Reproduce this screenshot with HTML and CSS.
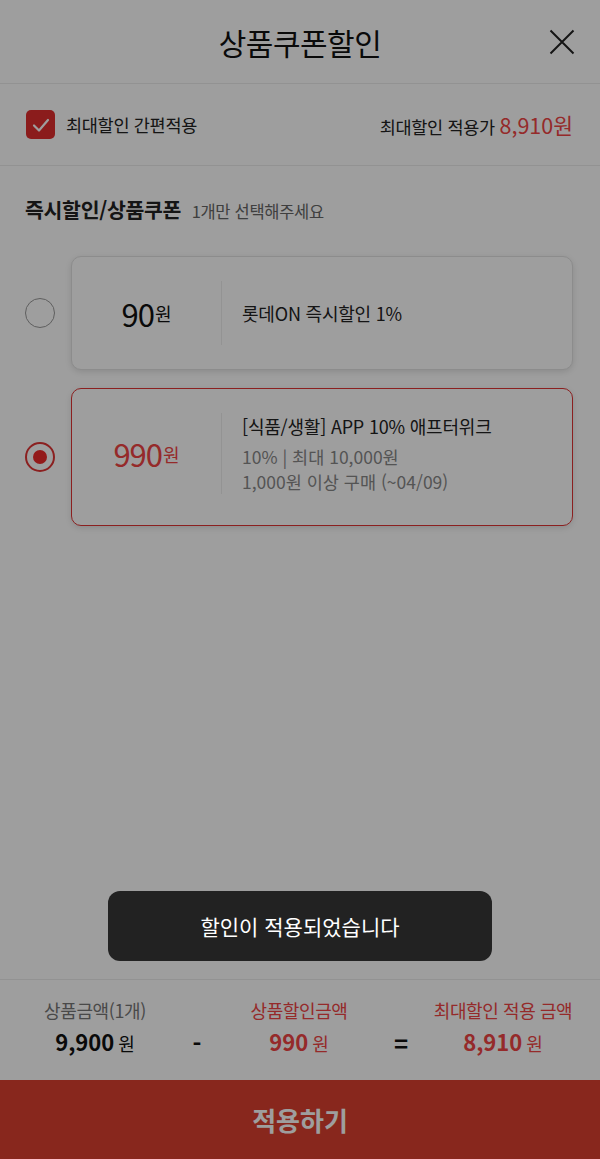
FILE: index.html
```html
<!DOCTYPE html>
<html lang="ko">
<head>
    <meta charset="UTF-8">
    <meta name="viewport" content="width=device-width, initial-scale=1.0">
    <title>상품쿠폰할인</title>
    <link rel="stylesheet" href="styles.css">
</head>
<body>
    <div class="sheet">
        <header class="sheet-header">
            <h1>상품쿠폰할인</h1>
            <button class="close-btn" aria-label="닫기">
                <svg width="26" height="26" viewBox="0 0 26 26">
                    <path d="M1.5 1.5 L24.5 24.5 M24.5 1.5 L1.5 24.5" stroke="#222" stroke-width="2" fill="none"/>
                </svg>
            </button>
        </header>

        <div class="best-row">
            <label class="best-check">
                <span class="checkbox">
                    <svg width="20" height="20" viewBox="0 0 20 20">
                        <path d="M3 10.5 L8 15.5 L17 5" stroke="#fff" stroke-width="2.2" fill="none" stroke-linecap="round" stroke-linejoin="round"/>
                    </svg>
                </span>
                최대할인 간편적용
            </label>
            <div class="best-price">최대할인 적용가 <strong>8,910원</strong></div>
        </div>

        <section class="coupons">
            <h2>즉시할인/상품쿠폰 <span>1개만 선택해주세요</span></h2>

            <div class="coupon-row">
                <span class="radio"></span>
                <div class="coupon">
                    <div class="coupon-amount">90<small>원</small></div>
                    <div class="coupon-info">
                        <p class="coupon-name">롯데ON 즉시할인 1%</p>
                    </div>
                </div>
            </div>

            <div class="coupon-row selected">
                <span class="radio"></span>
                <div class="coupon">
                    <div class="coupon-amount">990<small>원</small></div>
                    <div class="coupon-info">
                        <p class="coupon-name">[식품/생활] APP 10% 애프터위크</p>
                        <p class="coupon-desc">10% | 최대 10,000원</p>
                        <p class="coupon-desc">1,000원 이상 구매 (~04/09)</p>
                    </div>
                </div>
            </div>
        </section>

        <footer class="summary">
            <div class="summary-item">
                <span class="summary-label">상품금액(1개)</span>
                <span class="summary-value">9,900<small>원</small></span>
            </div>
            <span class="summary-op">-</span>
            <div class="summary-item red">
                <span class="summary-label">상품할인금액</span>
                <span class="summary-value">990<small>원</small></span>
            </div>
            <span class="summary-op">=</span>
            <div class="summary-item red">
                <span class="summary-label">최대할인 적용 금액</span>
                <span class="summary-value">8,910<small>원</small></span>
            </div>
        </footer>
        <button class="apply-btn">적용하기</button>
    </div>

    <div class="dim"></div>
    <div class="toast">할인이 적용되었습니다</div>
</body>
</html>
```

FILE: styles.css
```css
* {
    box-sizing: border-box;
}
body {
    margin: 0;
    font-family: "Noto Sans CJK KR", "Noto Sans", sans-serif;
    color: #111;
    background-color: #fff;
}
p, h1, h2 {
    margin: 0;
}
.sheet {
    display: flex;
    flex-direction: column;
    height: 1159px;
    background: #fff;
}
.sheet-header {
    height: 84px;
    display: flex;
    align-items: center;
    justify-content: center;
    position: relative;
    border-bottom: 1px solid #ececec;
}
.sheet-header h1 {
    font-size: 30px;
    font-weight: 400;
    letter-spacing: -0.5px;
}
.close-btn {
    position: absolute;
    right: 25px;
    top: 29px;
    background: none;
    border: none;
    padding: 0;
    width: 26px;
    height: 26px;
}
.best-row {
    height: 82px;
    display: flex;
    align-items: center;
    justify-content: space-between;
    padding: 0 27px 0 26px;
    border-bottom: 1px solid #ececec;
}
.best-check {
    display: flex;
    align-items: center;
    gap: 11px;
    font-size: 17.5px;
    letter-spacing: -0.3px;
    color: #222;
}
.checkbox {
    width: 29px;
    height: 29px;
    border-radius: 5px;
    background: #e02e2e;
    display: flex;
    align-items: center;
    justify-content: center;
}
.best-price {
    font-size: 17.5px;
    letter-spacing: -0.3px;
    color: #222;
}
.best-price strong {
    font-size: 21.5px;
    font-weight: 400;
    letter-spacing: 0;
    color: #f04444;
}
.coupons {
    flex: 1;
    padding: 28px 27px 0 25px;
}
.coupons h2 {
    font-size: 20.5px;
    font-weight: 700;
    color: #222;
    margin-bottom: 32px;
    letter-spacing: -0.3px;
}
.coupons h2 span {
    font-size: 16.5px;
    font-weight: 400;
    color: #666;
    margin-left: 5px;
    letter-spacing: -0.3px;
}
.coupon-row {
    display: flex;
    align-items: center;
    gap: 16px;
    margin-bottom: 18px;
}
.radio {
    width: 30px;
    height: 30px;
    border-radius: 50%;
    border: 1.5px solid #999;
    flex-shrink: 0;
    display: flex;
    align-items: center;
    justify-content: center;
}
.selected .radio {
    border: 2px solid #e03535;
}
.selected .radio::after {
    content: "";
    width: 14px;
    height: 14px;
    border-radius: 50%;
    background: #ee2a2a;
}
.coupon {
    flex: 1;
    display: flex;
    align-items: stretch;
    min-height: 114px;
    background: #fff;
    border: 1px solid #e2e2e2;
    border-radius: 10px;
    box-shadow: 0 2px 6px rgba(0, 0, 0, 0.12);
    padding: 24px 0;
}
.selected .coupon {
    border: 1.5px solid #e03535;
    padding: 24px 0 31px;
}
.coupon-amount {
    width: 150px;
    display: flex;
    align-items: center;
    justify-content: center;
    font-size: 31px;
    letter-spacing: -1px;
    color: #111;
    border-right: 1px solid #eee;
}
.coupon-amount small {
    font-size: 18px;
    letter-spacing: 0;
    margin-left: 1px;
}
.selected .coupon-amount {
    color: #f04545;
}
.coupon-info {
    padding-left: 20px;
    display: flex;
    flex-direction: column;
    justify-content: center;
}
.coupon-name {
    font-size: 18px;
    color: #222;
    letter-spacing: -0.2px;
    line-height: 26px;
}
.coupon-desc {
    font-size: 17.5px;
    color: #888;
    line-height: 25px;
}
.coupon-name + .coupon-desc {
    margin-top: 5px;
}
.summary {
    height: 101px;
    border-top: 1px solid #ececec;
    display: flex;
    align-items: center;
    padding: 0 0 6px 44px;
}
.summary-item,
.summary-op {
    width: 102px;
    display: flex;
    flex-direction: column;
    align-items: center;
}
.summary-item {
    gap: 2px;
}
.summary-label {
    font-size: 18px;
    color: #777;
    letter-spacing: -0.4px;
    white-space: nowrap;
}
.summary-value {
    font-size: 22px;
    font-weight: 700;
    color: #111;
    white-space: nowrap;
}
.summary-value small {
    font-size: 18px;
    font-weight: 400;
    margin-left: 4px;
}
.summary-op {
    font-size: 24px;
    font-weight: 700;
    margin-top: 30px;
}
.red .summary-label,
.red .summary-value {
    color: #f04545;
}
.apply-btn {
    height: 79px;
    border: none;
    background: #dc4030;
    color: #fff;
    font-family: inherit;
    font-size: 26px;
    font-weight: 700;
    width: 100%;
}
.dim {
    position: fixed;
    inset: 0;
    background: rgba(0, 0, 0, 0.38);
}
.toast {
    position: fixed;
    left: 108px;
    top: 891px;
    width: 384px;
    height: 70px;
    border-radius: 12px;
    background: #222;
    color: #fff;
    font-size: 21px;
    display: flex;
    align-items: center;
    justify-content: center;
}
```
